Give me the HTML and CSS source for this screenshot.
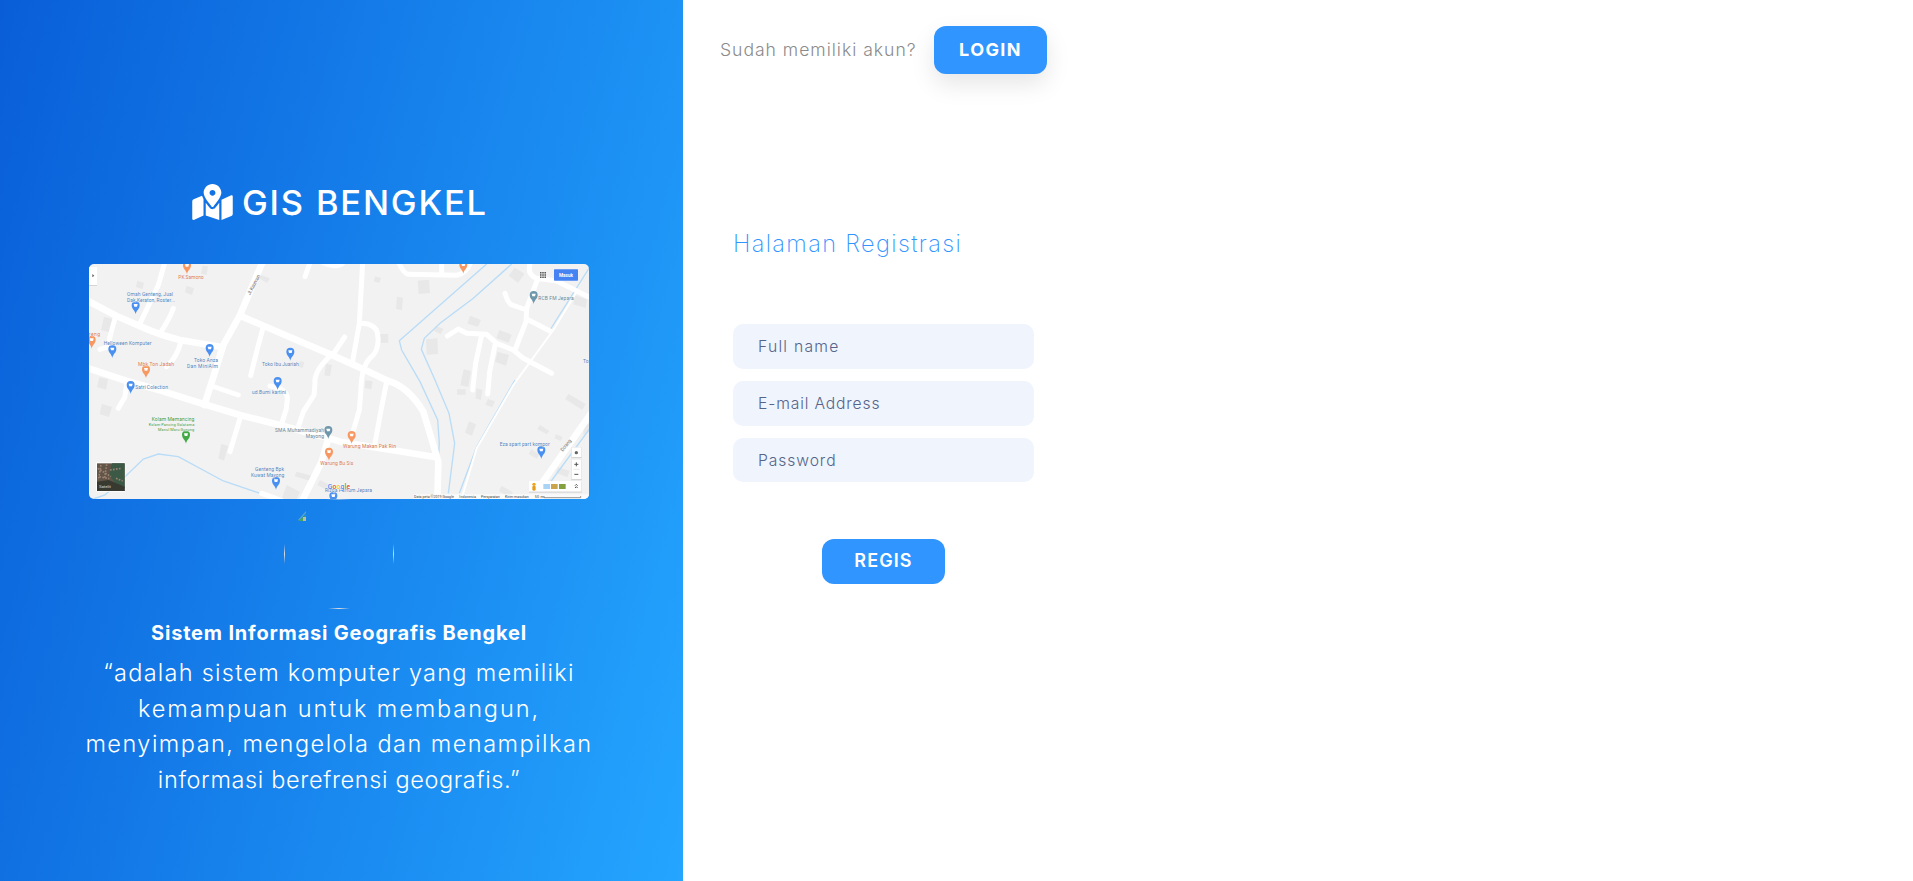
FILE: index.html
```html
<!DOCTYPE html>
<html lang="id">
<head>
<meta charset="utf-8">
<title>GIS Bengkel</title>
<link rel="stylesheet" href="styles.css">
</head>
<body>
<main class="page">
  <section class="brand-panel">
    <h1 class="brand">
      <svg class="brand-icon" viewBox="0 0 576 512" fill="currentColor"><path d="M288 0c-69.59 0-126 56.41-126 126 0 56.26 82.35 158.8 113.9 196.02 6.39 7.54 17.82 7.54 24.2 0C331.65 284.8 414 182.26 414 126 414 56.41 357.59 0 288 0zm0 168c-23.2 0-42-18.8-42-42s18.8-42 42-42 42 18.8 42 42-18.8 42-42 42zM20.12 215.95A32.006 32.006 0 0 0 0 245.66v250.32c0 11.32 11.43 19.06 21.94 14.86L160 448V214.92c-8.84-15.98-16.07-31.54-21.25-46.42L20.12 215.95zM288 359.67c-14.07 0-27.38-6.18-36.51-16.96-19.66-23.2-40.57-49.62-59.49-76.72v182l192 64V266c-18.92 27.09-39.82 53.52-59.49 76.72-9.13 10.77-22.44 16.95-36.51 16.95zm266.06-198.51L416 224v288l139.88-55.95A31.996 31.996 0 0 0 576 426.34V176.02c0-11.32-11.43-19.06-21.94-14.86z"/></svg>
      <span>GIS BENGKEL</span>
    </h1>
    <svg class="map" viewBox="27 27 1500 705">
      <defs>
        <g id="pin"><path d="M0 20C-2 8-12 4-12-7a12 12 0 0 1 24 0C12 4 2 8 0 20z"/><path d="M-6-11H6L4-3H-4z" fill="#fff"/></g>
      </defs>
      <rect x="27" y="27" width="1500" height="705" fill="#f2f2f2"/>
      <g fill="#e8e8e8">
        <path d="M72 185l38 10-9 40-38-10zM172 77l20 6-5 20-19-7zM320 92l22 8-6 20-21-8zM368 32l16 2-4 26-17-4zM543 60l27 10-9 14-24-14zM58 367l26 5-6 32-27-8zM66 447l30 9-9 30-28-9zM424 567l20 6-12 44-17-7zM738 327l18 3-6 34-17-3zM660 318l13 4-5 17-13-4z"/>
        <path d="M886 64l17 5-5 15-17-5zM1013 77l34-3 3 40-34 3zM951 125l18 3-3 37-18-3zM900 237h25v26h-25zM1304 38l30 18-20 28-28-22zM1170 182l33 13-9 20-32-9zM1068 213l22 8-8 17-20-10zM1038 252l34-2 2 47-34 2zM1258 225l37 14-9 24-37-14zM1253 290l34 10-9 32-33-12zM1151 343l22 5-8 48-24-5zM1485 120l36 14-4 25-37-11zM856 376l22 3-4 24-20-4z"/>
        <path d="M1131 403h26v16h-26zM1190 400l17 5-4 30-17-5zM1224 432l21 7-8 18-21-8zM1167 499l21 9-12 34-21-9zM1465 416l52 31-10 18-51-32zM1380 510l28 18-8 10-28-16zM1428 538l20 8-6 12-18-8zM1354 583l24 16-8 12-24-14zM1434 637l35 10-7 20-35-14zM1264 692l35 20-8 15-34-18zM1510 510l20-5v25l-20 10zM650 650l45 12-5 16-46-14zM620 690l40 20-10 22h-45zM720 675l40 20-8 15-40-20z"/>
      </g>
      <g class="water">
        <path d="M40 732l35-12 60-55 55-53 45-15 60 8 135 73 110 37"/>
        <path d="M1220 27L958 257l7 28 55 95 53 115 5 70-3 50"/>
        <path d="M1295 27L1180 130l-100 75-47 45-9 33 41 92 42 100 17 90-19 150"/>
        <path d="M1305 375L1190 575l-52 140M1530 35L1410 225M1530 520L1405 690"/>
      </g>
      <g class="roads">
        <path class="thin" d="M1490 110L1420 225 1300 390 1190 580 1148 720"/>
        <path class="wide" d="M20 136L110 183l80 35q50 22 110 37l120 20M548 20L480 180l-50 90-25 80-32 100M480 182l65 28 215 92 95 43 70 33q60 17 105 92l45 150-3 115M20 338l120 40 100 28 130 41 110 33 110 28 140 37 50 15 280 45M745 550l-20 70-60 120M1535 472L1375 700"/>
        <path d="M255 20l-20 70-55 115M280 160q-10 30-40 75M105 190l-15 55-5 30-25 8M302 262q-10 43-42 73M550 215l-20 75-18 72M140 385l-5 40-20 35M395 393l80 27M480 490l-30 100M570 393q52 8 52 38l-3 30-14 45M794 246l-29 44q-65 55-60 95l-3 35-32 50-15 45M848 20l-10 185-20 113M838 205q52 0 55 35 7 45-23 70-25 25-27 90l-5 65-25 85M920 380l-15 75-20 110M955 20q15 35 30 38l145 3q30-5 43-41M1085 25v32M675 65l16-45M727 22q48 22 65-2M1352 20q-14 37 18 50l60 8 105 52M1370 80l-30 80-2 40-33 85M1275 115q10 33 22 35l43 15M1340 192l70 36M1102 243l33-21 25 13 60 3 30 27 50 20 30 25 85 45M1205 240l-18 85-9 80M1245 270l-16 80-6 67M545 715l60 22"/>
      </g>
      <g fill="#4a90f0">
        <use href="#pin" x="167" y="158"/><use href="#pin" x="97" y="289"/><use href="#pin" x="389" y="286"/><use href="#pin" x="631" y="297"/><use href="#pin" x="593" y="385"/><use href="#pin" x="152" y="397"/><use href="#pin" x="588" y="684"/><use href="#pin" x="1384" y="592"/><use href="#pin" x="760" y="729"/>
      </g>
      <g fill="#f79862"><use href="#pin" x="321" y="38"/><use href="#pin" x="35" y="261"/><use href="#pin" x="198" y="350"/><use href="#pin" x="1150" y="36"/><use href="#pin" x="747" y="597"/><use href="#pin" x="815" y="547"/></g>
      <g fill="#6f97ab"><use href="#pin" x="1361" y="127"/><use href="#pin" x="745" y="532"/></g>
      <use href="#pin" x="318" y="546" fill="#43a947"/>
      <g class="labels" fill="#5584bd">
        <text x="141" y="123" textLength="138">Omah Genteng, Jual</text><text x="141" y="140" textLength="144">Dak Keraton, Roster...</text>
        <text x="71" y="271" textLength="143">Helloween Komputer</text>
        <text x="342" y="322" textLength="72">Toko Anza</text><text x="321" y="339" textLength="93">Dan MiniAlm</text>
        <text x="546" y="332" textLength="110">Toko Ibu Juariah</text><text x="516" y="418" textLength="102">ud.Bumi kartini</text>
        <text x="166" y="403" textLength="98">Satri Colection</text>
        <text x="525" y="647" textLength="87">Genteng Bpk</text><text x="513" y="665" textLength="100">Kuwat Mayong</text>
        <text x="1259" y="574" textLength="150">Eza spart part kompor</text><text x="1509" y="323">To</text>
        <text x="735" y="711" textLength="141">Rizqa Parfum Jepara</text>
      </g>
      <g class="labels" fill="#dc7a50">
        <text x="295" y="73" textLength="76">PK Samono</text><text x="27" y="243" textLength="33">reng</text>
        <text x="174" y="332" textLength="108">Mbk Ton Jadah</text><text x="721" y="630" textLength="99">Warung Bu Sis</text>
        <text x="789" y="580" textLength="159">Warung Makan Pak Rin</text>
      </g>
      <g class="labels" fill="#6c8795">
        <text x="1375" y="135" textLength="106">RCB FM Jepara</text><text x="585" y="532" textLength="147">SMA Muhammadiyah</text><text x="677" y="549" textLength="55">Mayong</text>
      </g>
      <g class="labels" fill="#3b9a3e">
        <text x="215" y="499" textLength="128">Kolam Memancing</text><text class="small" x="206" y="513" textLength="137">Kolam Pancing Galatama</text><text class="small" x="234" y="528" textLength="109">Manul Maru Gunung</text>
      </g>
      <g class="labels" fill="#777"><text transform="translate(510 121) rotate(-62)" textLength="66">Jl. Kauman</text><text transform="translate(1448 590) rotate(-50)" textLength="42">Dorang</text></g>
      <text class="google" x="743" y="703" textLength="67"><tspan fill="#4285f4">G</tspan><tspan fill="#ea4335">o</tspan><tspan fill="#fbbc05">o</tspan><tspan fill="#4285f4">g</tspan><tspan fill="#34a853">l</tspan><tspan fill="#ea4335">e</tspan></text>
      <g class="card"><path d="M27 36h24v54H27z"/><path d="M1474 577h31v30h-31zM1474 613h31v60h-31zM1347 678h158v32h-158z"/></g>
      <path d="M37 57l6 5-6 5z" fill="#666"/>
      <path d="M1480 643h19" stroke="#ddd" stroke-width="2"/>
      <path d="M1483 628h12M1489 622v12M1483 658h12M1485 692l4-4 4 4M1485 699l4-4 4 4" fill="none" stroke="#555" stroke-width="3"/>
      <circle cx="1489" cy="593" r="5" fill="#666"/>
      <circle cx="1362" cy="688" r="5" fill="#f0a81c"/><rect x="1357" y="692" width="10" height="15" rx="4" fill="#e79b1b"/>
      <path d="M1390 687h20v15h-20z" fill="#a9d4f5"/><path d="M1413 687h20v15h-20z" fill="#c9a44c"/><path d="M1437 687h20v15h-20z" fill="#83a13f"/>
      <path d="M1380 53h18M1380 60h18M1380 67h18" stroke="#555" stroke-width="4.5" stroke-dasharray="4.6 2.1"/>
      <rect x="1422" y="43" width="72" height="34" rx="2" fill="#4683f2"/><text class="masuk" x="1437" y="66" textLength="42">Masuk</text>
      <rect x="48" y="622" width="88" height="88" rx="4" fill="#fff"/><rect x="51" y="625" width="83" height="83" fill="#625548"/>
      <path d="M96 625h38v75l-22-8-25-32z" fill="#3c5946"/><path d="M51 680l35-5 48 20v13H51z" fill="#383a32"/>
      <path d="M53 640l40 25M63 630l-8 45M80 628l-6 40M90 645l35-5M108 670l20 8M58 665l30 6" stroke="#9c8272" stroke-width="5" stroke-dasharray="5 4"/>
      <text x="57" y="698" class="satelit" textLength="36">Satelit</text>
      <path d="M1001 718h526v14h-526z" fill="#fafafa"/>
      <g class="legal"><text x="1002" y="729" textLength="120">Data peta ©2019 Google</text><text x="1138" y="729" textLength="50">Indonesia</text><text x="1203" y="729" textLength="56">Persyaratan</text><text x="1275" y="729" textLength="71">Kirim masukan</text><text x="1364" y="729" textLength="27">50 m</text></g>
      <path d="M1392 723v5h110v-5" fill="none" stroke="#666" stroke-width="2"/>
    </svg>
    <div class="avatar">
      <svg viewBox="0 0 110 110">
        <defs>
          <linearGradient id="fadeV" x2="0" y2="1"><stop stop-color="#ddd" stop-opacity="0"/><stop offset=".5" stop-color="#ddd"/><stop offset="1" stop-color="#ddd" stop-opacity="0"/></linearGradient>
          <linearGradient id="fadeH"><stop stop-color="#ddd" stop-opacity="0"/><stop offset=".5" stop-color="#ddd"/><stop offset="1" stop-color="#ddd" stop-opacity="0"/></linearGradient>
        </defs>
        <g fill="url(#fadeV)"><path d="M0 45h1v20H0z"/><path d="M109 45h1v20h-1z"/></g>
        <g fill="url(#fadeH)"><path d="M44 109h22v1H44z"/><path d="M42 0h26v1H42z" opacity=".5"/></g>
        <path d="M14 21l8-9v2l-6 7z" fill="#58a3d0"/><path d="M14 22l8-6v6z" fill="#48a55b"/><path d="M19 18h3v4h-3z" fill="#b8bd9d"/>
      </svg>
    </div>
    <h2 class="tagline"><span>Sistem Informasi Geografis Bengkel</span></h2>
    <p class="quote"><span class="q1">“adalah sistem komputer yang memiliki</span><span class="q2">kemampuan untuk membangun,</span><span class="q3">menyimpan, mengelola dan menampilkan</span><span class="q4">informasi berefrensi geografis.”</span></p>
  </section>
  <section class="form-panel">
    <header class="login-row"><span class="login-hint">Sudah memiliki akun?</span><a class="btn btn-login">LOGIN</a></header>
    <form class="register">
      <h3 class="form-title">Halaman Registrasi</h3>
      <div class="field f-name">Full name</div>
      <div class="field f-mail">E-mail Address</div>
      <div class="field f-pass">Password</div>
      <div class="btn btn-regis">REGIS</div>
    </form>
  </section>
</main>
</body>
</html>
```
FILE: styles.css
```css
* { box-sizing: border-box; }
body { margin: 0; background: #fff; font-family: Inter, "Liberation Sans", sans-serif; }
.page { display: flex; height: 881px; overflow: hidden; }
.brand-panel {
  width: 683px; height: 881px; padding: 179px 5px 0 0; color: #fff;
  display: flex; flex-direction: column; align-items: center;
  background: linear-gradient(105deg, #095ed8 0%, #24a5ff 100%);
}
.brand { display: flex; align-items: center; gap: 9px; width: 294px; height: 46px; margin: 0; font-size: 34.5px; font-weight: 500; white-space: nowrap; letter-spacing: 1.8px; }
.brand-icon { width: 41px; height: 36px; flex: none; }
.map { display: block; width: 500px; height: 235px; margin-top: 39px; border-radius: 5px; }
.avatar { width: 110px; height: 110px; }
.avatar svg { display: block; width: 110px; height: 110px; }
.tagline { margin: 10px 0 0; height: 28px; line-height: 28px; font-size: 20px; font-weight: 700; white-space: nowrap; letter-spacing: .8px; }
.quote { display: flex; flex-direction: column; align-items: center; margin: 8px 0 0; font-size: 23.5px; font-weight: 300; line-height: 35.7px; white-space: nowrap; }
.q1 { letter-spacing: 1.26px; }
.q2 { letter-spacing: 1.9px; }
.q3 { letter-spacing: 1.47px; }
.q4 { letter-spacing: .63px; }

.water { fill: none; stroke: #b9dcf7; stroke-width: 4; }
.roads { fill: none; stroke: #fff; stroke-width: 15; stroke-linecap: round; stroke-linejoin: round; }
.roads .wide { stroke-width: 20; }
.roads .thin { stroke-width: 6; }
.labels { font: 15px Roboto, sans-serif; paint-order: stroke; stroke: #f5f5f5; stroke-width: 2px; }
.labels .small { font-size: 12px; }
.google { font: 500 20px Roboto, sans-serif; stroke: #fff; stroke-width: 2px; paint-order: stroke; }
.card { fill: #fff; filter: drop-shadow(0 1px 2px rgba(0, 0, 0, .35)); }
.masuk { font: 700 14px Roboto, sans-serif; fill: #fff; }
.satelit { font: 13px Roboto, sans-serif; fill: #ddd; }
.legal { font: 11px Roboto, sans-serif; fill: #444; }

.form-panel { width: 413px; padding: 26px 0 0 37px; }
.login-row { display: flex; align-items: center; height: 48px; }
.login-hint { width: 214px; padding-bottom: 1px; font-size: 17.6px; font-weight: 300; color: #8b8b8b; white-space: nowrap; letter-spacing: .97px; }
.btn { display: flex; align-items: center; justify-content: center; padding-bottom: 2px; background: #3095ff; color: #fff; border-radius: 12px; font-size: 18px; }
.btn-login { width: 113px; height: 48px; font-weight: 700; letter-spacing: 1.4px; box-shadow: 0 10px 24px rgba(0, 0, 0, .1); }
.register { margin: 152px 0 0 13px; width: 301px; }
.form-title { margin: 0 0 62px; height: 36px; line-height: 36px; font-size: 23.5px; font-weight: 200; color: #3095ff; letter-spacing: 1.37px; white-space: nowrap; }
.field { height: 45px; line-height: 45px; margin-bottom: 12px; padding-left: 25px; border-radius: 10px; background: #eff4fd; color: #56648a; font-size: 15.7px; font-weight: 300; }
.f-name { letter-spacing: 1.25px; }
.f-mail { letter-spacing: .85px; }
.f-pass { height: 44px; letter-spacing: .9px; }
.btn-regis { width: 123px; height: 45px; margin: 57px auto 0; font-weight: 600; letter-spacing: 1.1px; }
```
